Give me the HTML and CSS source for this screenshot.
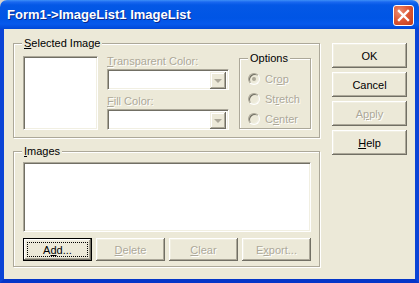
FILE: index.html
```html
<!DOCTYPE html>
<html>
<head>
<meta charset="utf-8">
<link rel="stylesheet" href="styles.css">
</head>
<body>
<div class="window">
  <div class="titlebar">
    <span class="title">Form1-&gt;ImageList1 ImageList</span>
    <span class="close"><svg width="19" height="19" viewBox="0 0 19 19"><path d="M5 5 L14 14 M14 5 L5 14" stroke="#fff" stroke-width="2.4" stroke-linecap="square"/></svg></span>
  </div>
  <div class="frame">
    <div class="left">
      <div class="group sel-group">
        <span class="legend"><u>S</u>elected Image</span>
        <div class="sunken preview"></div>
        <div class="colors">
          <div class="label disabled"><u>T</u>ransparent Color:</div>
          <div class="combo"><span class="drop"><span class="arrow"></span></span></div>
          <div class="label disabled second"><u>F</u>ill Color:</div>
          <div class="combo"><span class="drop"><span class="arrow"></span></span></div>
        </div>
        <div class="group options">
          <span class="legend">Options</span>
          <div class="radio disabled"><span class="circle checked"></span>Cr<u>o</u>p</div>
          <div class="radio disabled"><span class="circle"></span>St<u>r</u>etch</div>
          <div class="radio disabled"><span class="circle"></span>C<u>e</u>nter</div>
        </div>
      </div>
      <div class="group images-group">
        <span class="legend"><u>I</u>mages</span>
        <div class="sunken list"></div>
        <div class="btn-row">
          <div class="btn small default"><span class="focus">A<u>d</u>d...</span></div>
          <div class="btn small disabled"><u>D</u>elete</div>
          <div class="btn small disabled"><u>C</u>lear</div>
          <div class="btn small disabled">E<u>x</u>port...</div>
        </div>
      </div>
    </div>
    <div class="right">
      <div class="btn big">OK</div>
      <div class="btn big">Cancel</div>
      <div class="btn big disabled">A<u>p</u>ply</div>
      <div class="btn big"><u>H</u>elp</div>
    </div>
  </div>
</div>
</body>
</html>
```

FILE: styles.css
```css
* { box-sizing: border-box; }
body {
  margin: 0;
  background: #d6d3ce;
  font-family: "Liberation Sans", Tahoma, sans-serif;
  font-size: 11px;
  color: #000;
}
u { text-decoration: underline; text-underline-offset: 1px; }
.window {
  width: 419px;
  height: 283px;
  display: flex;
  flex-direction: column;
}
.titlebar {
  height: 29px;
  flex: none;
  display: flex;
  align-items: flex-start;
  border-radius: 7px 7px 0 0;
  background: linear-gradient(#3d8ff7 0, #1a68f0 2px, #0458e6 5px, #0055e5 18px, #0659ec 24px, #0048d8 29px);
}
.title {
  flex: 1;
  margin: 7px 0 0 7px;
  color: #fff;
  font: bold 13px/15px "Liberation Sans", Arial, sans-serif;
  text-shadow: 1px 1px 0 #0a2a8c;
  white-space: nowrap;
}
.close {
  width: 21px;
  height: 21px;
  margin: 5px 5px 0 0;
  border: 1px solid #fff;
  border-radius: 3px;
  background: radial-gradient(circle at 30% 30%, #ec8f73 0, #de5a38 45%, #c23a18 100%);
  display: flex;
  align-items: center;
  justify-content: center;
}
.close svg { display: block; }
.frame {
  flex: 1;
  display: flex;
  gap: 12px;
  background: #ece9d8;
  border: 4px solid #0b44d6;
  border-top: 0;
  border-bottom-color: #0536c8;
  padding: 14px 8px 0 9px;
}
.left { width: 307px; display: flex; flex-direction: column; }
.right { width: 75px; display: flex; flex-direction: column; gap: 4px; }

.group {
  position: relative;
  border: 1px solid #aca899;
  box-shadow: inset 1px 1px 0 #fff, 1px 1px 0 #fff;
}
.legend {
  position: absolute;
  top: -7px;
  left: 8px;
  padding: 0 2px;
  line-height: 13px;
  background: #ece9d8;
  white-space: nowrap;
}
.sel-group {
  height: 95px;
  display: flex;
  align-items: flex-start;
  padding: 12px 0 0 9px;
}
.sunken {
  background: #fff;
  border: 1px solid;
  border-color: #aca899 #fff #fff #aca899;
  box-shadow: inset 1px 1px 0 #716f64, inset -1px -1px 0 #f1efe2;
}
.preview { width: 75px; height: 74px; flex: none; }
.colors {
  width: 122px;
  margin: -1px 0 0 9px;
}
.label { line-height: 13px; height: 13px; margin-bottom: 1px; white-space: nowrap; }
.label.second { margin-top: 5px; }
.disabled { color: #aca899; text-shadow: 1px 1px 0 #fff; }
.combo {
  height: 21px;
  background: #fff;
  border: 1px solid;
  border-color: #aca899 #fff #fff #aca899;
  box-shadow: inset 1px 1px 0 #716f64, inset -1px -1px 0 #f1efe2;
  padding: 2px 2px 2px 2px;
  display: flex;
  justify-content: flex-end;
}
.drop {
  width: 16px;
  height: 17px;
  background: #ece9d8;
  box-shadow: inset -1px -1px 0 #716f64, inset 1px 1px 0 #f1efe2, inset -2px -2px 0 #aca899, inset 2px 2px 0 #fff;
  display: flex;
  align-items: center;
  justify-content: center;
}
.arrow {
  width: 0;
  height: 0;
  border-left: 4px solid transparent;
  border-right: 4px solid transparent;
  border-top: 4px solid #aca899;
  margin-top: 1px;
}
.options {
  width: 72px;
  height: 71px;
  margin: 2px 0 0 10px;
  padding: 10px 0 0 8px;
}
.radio {
  height: 20px;
  display: flex;
  align-items: center;
  white-space: nowrap;
}
.circle {
  width: 12px;
  height: 12px;
  border-radius: 50%;
  margin-right: 5px;
  flex: none;
  background: #ece9d8;
  border: 1px solid;
  border-color: #aca899 #fff #fff #aca899;
  box-shadow: inset 1px 1px 0 #716f64, inset -1px -1px 0 #f1efe2;
  display: flex;
  align-items: center;
  justify-content: center;
}
.circle.checked::after {
  content: "";
  width: 4px;
  height: 4px;
  border-radius: 50%;
  background: #aca899;
}
.images-group {
  margin-top: 13px;
  height: 116px;
  padding: 10px 8px 0 9px;
}
.list { height: 70px; }
.btn-row {
  margin-top: 6px;
  display: flex;
  justify-content: space-between;
}
.btn {
  background: #ece9d8;
  box-shadow: inset -1px -1px 0 #716f64, inset 1px 1px 0 #fff, inset -2px -2px 0 #aca899, inset 2px 2px 0 #f1efe2;
  display: flex;
  align-items: center;
  justify-content: center;
  white-space: nowrap;
}
.btn.big { height: 25px; }
.btn.small { width: 69px; height: 23px; }
.btn.default {
  border: 1px solid #000;
  box-shadow: inset -1px -1px 0 #716f64, inset 1px 1px 0 #fff, inset -2px -2px 0 #aca899, inset 2px 2px 0 #f1efe2;
  padding: 3px;
}
.focus {
  flex: 1;
  align-self: stretch;
  border: 1px dotted #000;
  display: flex;
  align-items: center;
  justify-content: center;
}
```
